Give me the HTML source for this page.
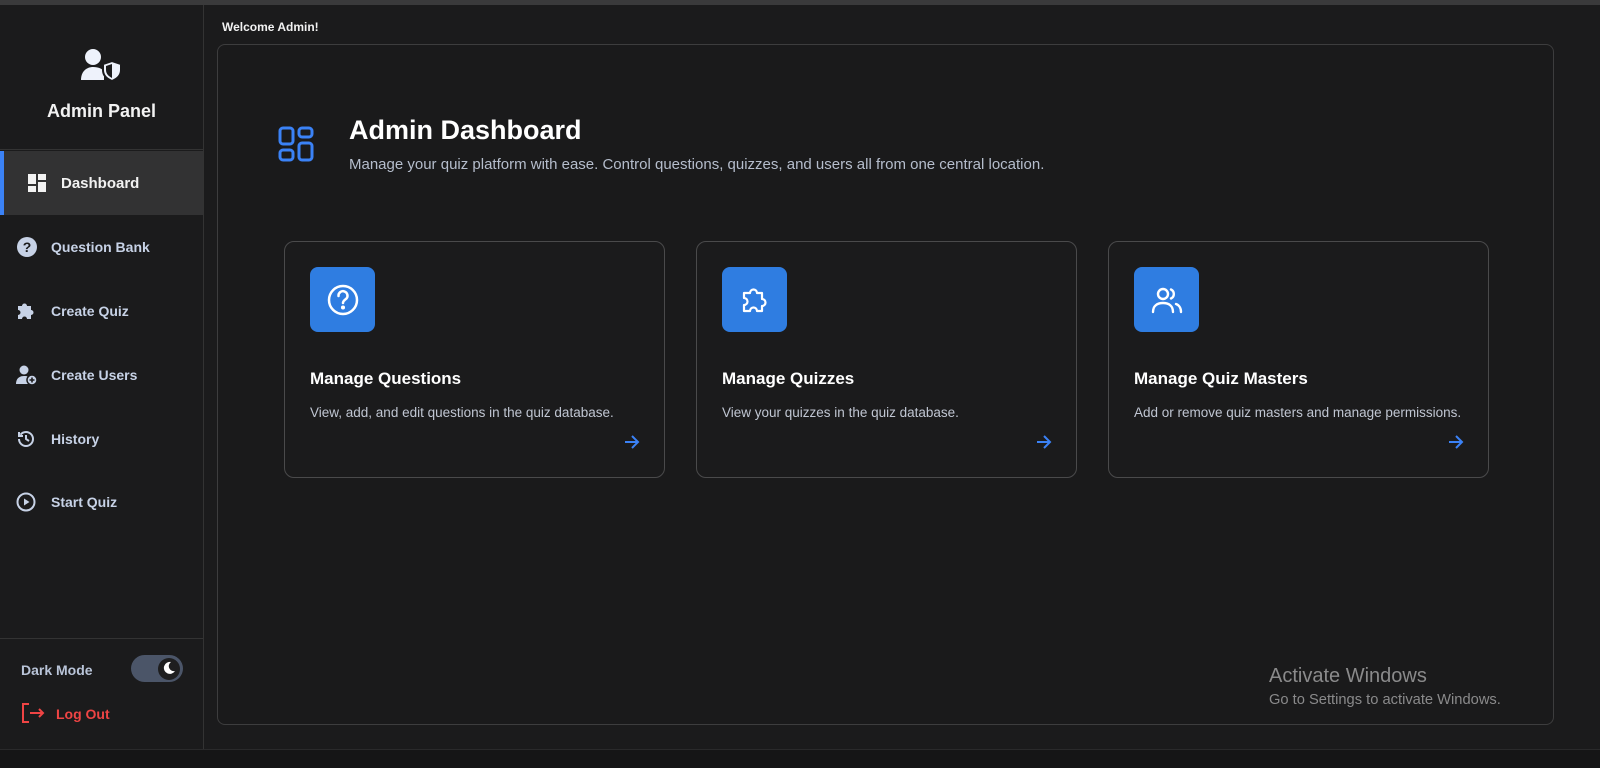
<!DOCTYPE html>
<html><head><meta charset="utf-8"><style>
*{box-sizing:border-box;margin:0;padding:0}
body{width:1600px;height:768px;background:#1b1b1c;font-family:"Liberation Sans",sans-serif;position:relative;overflow:hidden;color:#fff}
.top{position:absolute;left:0;top:0;width:1600px;height:5px;background:#3a3a3b}
.bot{position:absolute;left:0;top:749px;width:1600px;height:19px;background:#151516;border-top:1px solid #2a2a2b}
.side{position:absolute;left:0;top:5px;width:204px;height:744px;background:#1b1b1c;border-right:1px solid #333}
.hdr{position:absolute;left:0;top:0;width:203px;height:145px;border-bottom:1px solid #333}
.hdr .t{position:absolute;top:96px;width:100%;text-align:center;font-size:18px;font-weight:bold;color:#f2f2f2}
.nav{position:absolute;left:0;width:203px;height:64px;display:flex;align-items:center;font-weight:bold;font-size:14px;color:#c7d2e6}
.nav svg{position:absolute;left:16px}
.nav span{position:absolute;left:51px}
.act{background:#323233;border-left:4px solid #3b82f6;color:#f2f2f2;font-size:15px}
.act span{left:57px}
.foot{position:absolute;left:0;top:633px;width:203px;border-top:1px solid #333;height:111px}
.main{position:absolute;left:217px;top:44px;width:1337px;height:681px;border:1px solid #3d3d3e;border-radius:8px;background:#1a1a1b}
.card{position:absolute;top:196px;width:381px;height:237px;border:1.5px solid #4a4a4b;border-radius:10px;background:#1b1b1c}
.ib{position:absolute;left:25px;top:25px;width:65px;height:65px;border-radius:8px;background:#2f7de1;display:flex;align-items:center;justify-content:center}
.card h3{position:absolute;left:25px;top:127px;font-size:17px;color:#fff}
.card p{position:absolute;left:25px;top:163px;font-size:13.5px;color:#c0c6d2;white-space:nowrap}
.card .ar{position:absolute;right:24px;top:193px}
</style></head><body>
<div class="top"></div>
<div class="side">
 <div class="hdr">
  <svg style="position:absolute;left:81px;top:43px" width="42" height="34" viewBox="0 0 42 34"><circle cx="12" cy="9" r="8" fill="#eef2fb"/><path d="M0 32c0-9 6-13 12-13s9 2 11 4v9z" fill="#eef2fb"/><path d="M31 13l9 3v6c0 6-4 9-9 11-5-2-9-5-9-11v-6z" fill="#eef2fb" stroke="#1b1b1c" stroke-width="2"/><path d="M31 16v14c-3-1.5-6-4-6-8v-4z" fill="#1b1b1c"/></svg>
  <div class="t">Admin Panel</div>
 </div>
 <div class="nav act" style="top:146px"><svg style="left:24px" width="18" height="18" viewBox="0 0 18 18" fill="#f2f2f2"><rect x="0" y="0" width="8" height="10"/><rect x="10" y="0" width="8" height="6"/><rect x="0" y="12" width="8" height="6"/><rect x="10" y="8" width="8" height="10"/></svg><span>Dashboard</span></div>
 <div class="nav" style="top:210px"><svg width="22" height="22" viewBox="0 0 22 22"><circle cx="11" cy="11" r="10" fill="#c7d2e6"/><text x="11" y="16" text-anchor="middle" font-size="14" font-weight="bold" fill="#1b1b1c" font-family="Liberation Sans">?</text></svg><span>Question Bank</span></div>
 <div class="nav" style="top:274px"><svg width="20" height="20" viewBox="0 0 20 20" fill="#c7d2e6"><path d="M2 5h4a2.5 2.5 0 115 0h4v4a2.5 2.5 0 110 5v4h-4a2.5 2.5 0 10-5 0H2v-4a2.5 2.5 0 100-5z"/></svg><span>Create Quiz</span></div>
 <div class="nav" style="top:338px"><svg width="22" height="20" viewBox="0 0 22 20" fill="#c7d2e6"><circle cx="8" cy="5" r="4.5"/><path d="M0 19c0-6 4-8 8-8s5 1 6 2v6z"/><circle cx="16" cy="15" r="5" stroke="#1b1b1c" stroke-width="1.5"/><path d="M16 12.5v5M13.5 15h5" stroke="#1b1b1c" stroke-width="1.6"/></svg><span>Create Users</span></div>
 <div class="nav" style="top:402px"><svg width="20" height="20" viewBox="0 0 20 20" fill="none" stroke="#c7d2e6" stroke-width="2"><path d="M3 10a7 7 0 107-7 7 7 0 00-5.5 2.7"/><path d="M3 3v4h4"/><path d="M10 6v4l3 2"/></svg><span>History</span></div>
 <div class="nav" style="top:465px"><svg width="20" height="20" viewBox="0 0 20 20"><circle cx="10" cy="10" r="8.5" fill="none" stroke="#c7d2e6" stroke-width="2"/><path d="M8 6.5v7l5.5-3.5z" fill="#c7d2e6"/></svg><span>Start Quiz</span></div>
 <div class="foot">
  <div style="position:absolute;left:21px;top:23px;font-size:14px;font-weight:bold;color:#b9c4d8">Dark Mode</div>
  <div style="position:absolute;left:131px;top:16px;width:52px;height:27px;border-radius:14px;background:#4b5568"><div style="position:absolute;right:3px;top:2.5px;width:22px;height:22px;border-radius:50%;background:#1e1e1f"></div><svg style="position:absolute;right:7px;top:6px" width="14" height="14" viewBox="0 0 14 14"><path d="M9 1a6 6 0 104 9A5 5 0 019 1z" fill="#fff"/></svg></div>
  <svg style="position:absolute;left:21px;top:64px" width="24" height="20" viewBox="0 0 24 20" fill="none" stroke="#ef4444" stroke-width="2"><path d="M8 1H2v18h6"/><path d="M9 10h13M18 6l4 4-4 4"/></svg>
  <div style="position:absolute;left:56px;top:67px;font-size:14px;font-weight:bold;color:#ef4444">Log Out</div>
 </div>
</div>
<div style="position:absolute;left:222px;top:20px;font-size:12px;font-weight:bold;color:#f2f2f2">Welcome Admin!</div>
<div class="main">
 <svg style="position:absolute;left:60px;top:81px" width="36" height="36" viewBox="0 0 36 36" fill="none" stroke="#3b82f6" stroke-width="3"><rect x="2" y="2" width="13" height="16" rx="3"/><rect x="21" y="2" width="13" height="9" rx="3"/><rect x="2" y="24" width="13" height="10" rx="3"/><rect x="21" y="17" width="13" height="17" rx="3"/></svg>
 <div style="position:absolute;left:131px;top:70px;font-size:27px;font-weight:bold;color:#fff">Admin Dashboard</div>
 <div style="position:absolute;left:131px;top:111px;font-size:15px;color:#b5bdcc;white-space:nowrap">Manage your quiz platform with ease. Control questions, quizzes, and users all from one central location.</div>
 <div class="card" style="left:66px"><div class="ib"><svg width="34" height="34" viewBox="0 0 34 34" fill="none" stroke="#fff" stroke-width="2.5"><circle cx="17" cy="17" r="14"/><path d="M12.5 13a4.5 4.5 0 118 2.5c-1.5 1.5-3.5 2-3.5 4.5" stroke-linecap="round"/><circle cx="17" cy="24.5" r=".8" fill="#fff"/></svg></div><h3>Manage Questions</h3><p>View, add, and edit questions in the quiz database.</p><svg class="ar" width="16" height="14" viewBox="0 0 16 14" fill="none" stroke="#3b82f6" stroke-width="2"><path d="M1 7h13M8 1l6 6-6 6"/></svg></div>
 <div class="card" style="left:478px"><div class="ib"><svg width="34" height="34" viewBox="0 0 34 34" fill="none" stroke="#fff" stroke-width="2.2" stroke-linejoin="round"><path d="M6 10h6a3.5 3.5 0 117 0h5v6a3.5 3.5 0 110 7v5h-5a3.5 3.5 0 10-7 0H6v-6a3.5 3.5 0 100-7z"/></svg></div><h3>Manage Quizzes</h3><p>View your quizzes in the quiz database.</p><svg class="ar" width="16" height="14" viewBox="0 0 16 14" fill="none" stroke="#3b82f6" stroke-width="2"><path d="M1 7h13M8 1l6 6-6 6"/></svg></div>
 <div class="card" style="left:890px"><div class="ib"><svg width="34" height="34" viewBox="0 0 34 34" fill="none" stroke="#fff" stroke-width="2.4" stroke-linecap="round"><circle cx="13" cy="11" r="5"/><path d="M3 29c0-6 4-9 10-9s10 3 10 9"/><path d="M21 6.5a5 5 0 010 9M26 21c3 1 5 4 5 8"/></svg></div><h3>Manage Quiz Masters</h3><p>Add or remove quiz masters and manage permissions.</p><svg class="ar" width="16" height="14" viewBox="0 0 16 14" fill="none" stroke="#3b82f6" stroke-width="2"><path d="M1 7h13M8 1l6 6-6 6"/></svg></div>
 <div style="position:absolute;left:1051px;top:620px;font-size:20px;color:#8a8a8b">Activate Windows</div>
 <div style="position:absolute;left:1051px;top:647px;font-size:14.7px;color:#8a8a8b">Go to Settings to activate Windows.</div>
</div>
<div class="bot"></div>
</body></html>
